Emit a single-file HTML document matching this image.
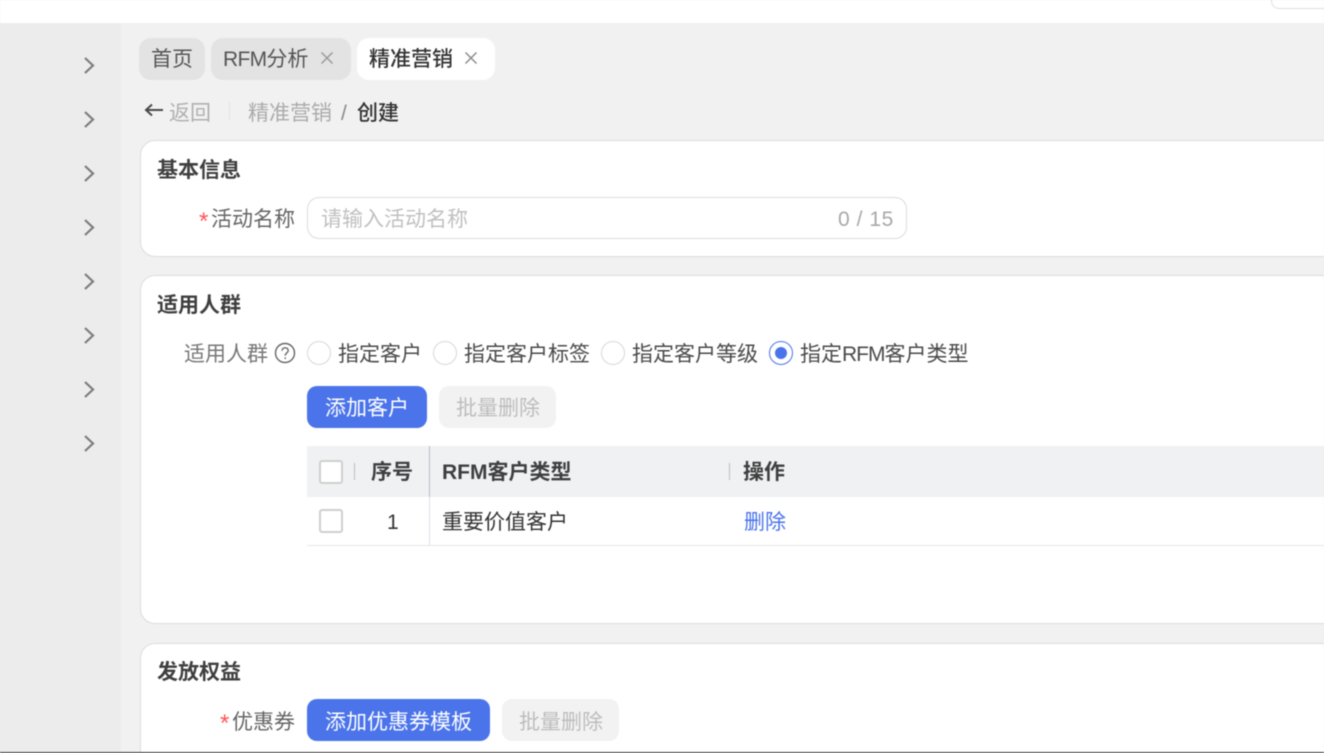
<!DOCTYPE html>
<html lang="zh-CN">
<head>
<meta charset="utf-8">
<style>
html,body{margin:0;padding:0;width:1324px;height:753px;overflow:hidden;background:#f0f0f0}
#p{position:relative;width:1324px;height:753px;overflow:hidden;background:#f1f1f1;font-family:"Liberation Sans","Noto Sans CJK SC",sans-serif;font-size:21px;color:#4a4a4a;filter:blur(.45px)}
#p div,#p svg{position:absolute}
.t{white-space:nowrap;line-height:30px;height:30px}
.b{font-weight:700;color:#3f3f3f}
.card{left:140px;width:1220px;background:#fff;border:1px solid #dcdcdc;border-radius:15px;box-sizing:border-box}
.radio{width:24px;height:24px;border:1.5px solid #d8d8d8;border-radius:50%;box-sizing:border-box;background:#fff}
.cb{width:24px;height:24px;border:2px solid #cfcfcf;border-radius:3px;box-sizing:border-box;background:#fff}
.btn{height:42px;border-radius:10px}
.blue{background:#4b74ea}
.gray{background:#f2f2f2}
.sep{width:1px;background:#b9bec6}
.star{font-size:24px;color:#f55}
.n{letter-spacing:-1px}
</style>
</head>
<body>
<div id="p">
  <div style="left:0;top:0;width:1324px;height:23px;background:#fff"></div>
  <div style="left:1271px;top:-12px;width:80px;height:19px;border:1px solid #dfdfdf;border-radius:8px;background:#fff"></div>
  <div style="left:0;top:23px;width:121px;height:730px;background:#ececec"></div>

  <svg style="left:80px;top:50px" width="20" height="410" fill="none" stroke="#7d7d7d" stroke-width="2.2">
    <path d="M5 8l8 7.500-8 7.500"/><path d="M5 62l8 7.500-8 7.500"/><path d="M5 116l8 7.500-8 7.500"/><path d="M5 170l8 7.500-8 7.500"/><path d="M5 224l8 7.500-8 7.500"/><path d="M5 278l8 7.500-8 7.500"/><path d="M5 332l8 7.500-8 7.500"/><path d="M5 386l8 7.500-8 7.500"/>
  </svg>

  <div style="left:139px;top:38px;width:66px;height:42px;border-radius:12px;background:#e3e3e3"></div>
  <div class="t" style="left:151px;top:45px;color:#555">首页</div>
  <div style="left:211px;top:38px;width:140px;height:42px;border-radius:12px;background:#e3e3e3"></div>
  <div class="t" style="left:223px;top:45px;color:#555"><span class="n" style="letter-spacing:-.7px">RFM</span>分析</div>
  <svg style="left:320px;top:51px" width="14" height="14" fill="none" stroke="#9a9a9a" stroke-width="1.500"><path d="M1.500 1.500l11 11M12.500 1.500l-11 11"/></svg>
  <div style="left:357px;top:38px;width:138px;height:42px;border-radius:12px;background:#fff"></div>
  <div class="t" style="left:369px;top:45px;color:#333;font-weight:500">精准营销</div>
  <svg style="left:464px;top:51px" width="14" height="14" fill="none" stroke="#8c8c8c" stroke-width="1.500"><path d="M1.500 1.500l11 11M12.500 1.500l-11 11"/></svg>

  <svg style="left:143px;top:100px" width="22" height="20" fill="none" stroke="#4a4a4a" stroke-width="2"><path d="M20 10H3M9 4.500L3 10l6 5.500"/></svg>
  <div class="t" style="left:169px;top:99px;color:#b0b0b0">返回</div>
  <div style="left:229px;top:102px;width:1px;height:18px;background:#e4e4e4"></div>
  <div class="t" style="left:248px;top:99px;color:#ababab">精准营销</div>
  <div class="t" style="left:341px;top:99px;color:#8a8a8a">/</div>
  <div class="t" style="left:357px;top:99px;color:#333;font-weight:500">创建</div>

  <div class="card" style="top:140px;height:117px"></div>
  <div class="t b" style="left:157px;top:156px">基本信息</div>
  <div class="t star" style="left:199px;top:207px">*</div>
  <div class="t" style="left:211px;top:205px;color:#666">活动名称</div>
  <div style="left:307px;top:197px;width:600px;height:42px;border:1.500px solid #dcdcdc;border-radius:12px;box-sizing:border-box;background:#fff"></div>
  <div class="t" style="left:321px;top:205px;color:#c0c0c0">请输入活动名称</div>
  <div class="t" style="left:838px;top:205px;color:#a8a8a8;letter-spacing:.55px">0 / 15</div>

  <div class="card" style="top:275px;height:349px"></div>
  <div class="t b" style="left:157px;top:291px">适用人群</div>
  <div class="t" style="left:184px;top:340px;color:#777">适用人群</div>
  <svg style="left:274px;top:342px" width="22" height="22" fill="none" stroke="#666" stroke-width="1.400"><circle cx="11" cy="11" r="9.500"/><path d="M8 8.800c0-4 6.200-4 6.200-.2 0 2.400-3 2.400-3 5"/><path d="M11.200 15.400v1.600"/></svg>
  <div class="radio" style="left:307px;top:341px"></div>
  <div class="t" style="left:338px;top:340px">指定客户</div>
  <div class="radio" style="left:433px;top:341px"></div>
  <div class="t" style="left:464px;top:340px">指定客户标签</div>
  <div class="radio" style="left:601px;top:341px"></div>
  <div class="t" style="left:632px;top:340px">指定客户等级</div>
  <div class="radio" style="left:769px;top:341px;border-color:#4b74ea"></div>
  <div style="left:775px;top:347px;width:12px;height:12px;border-radius:50%;background:#4b74ea"></div>
  <div class="t" style="left:800px;top:340px">指定<span class="n">RFM</span>客户类型</div>

  <div class="btn blue" style="left:307px;top:386px;width:120px"></div>
  <div class="t" style="left:325px;top:394px;color:#fff">添加客户</div>
  <div class="btn gray" style="left:439px;top:386px;width:117px"></div>
  <div class="t" style="left:456px;top:394px;color:#bdbdbd">批量删除</div>

  <div style="left:307px;top:446px;width:1017px;height:51px;background:#f0f1f3"></div>
  <div class="cb" style="left:319px;top:460px"></div>
  <div class="sep" style="left:354px;top:463px;height:17px"></div>
  <div class="t b" style="left:371px;top:458px">序号</div>
  <div style="left:429px;top:446px;width:1px;height:100px;background:#dfe1e5"></div>
  <div style="left:429px;top:446px;width:1px;height:51px;background:#b9bec6"></div>
  <div class="t b" style="left:442px;top:458px">RFM客户类型</div>
  <div class="sep" style="left:729px;top:463px;height:17px"></div>
  <div class="t b" style="left:743px;top:458px">操作</div>

  <div class="cb" style="left:319px;top:509px"></div>
  <div class="t" style="left:387px;top:508px;color:#333">1</div>
  <div class="t" style="left:442px;top:508px;color:#333">重要价值客户</div>
  <div class="t" style="left:744px;top:508px;color:#4b74ea">删除</div>
  <div style="left:307px;top:545px;width:1017px;height:1px;background:#e6e6e6"></div>

  <div class="card" style="top:643px;height:131px"></div>
  <div class="t b" style="left:157px;top:658px">发放权益</div>
  <div class="t star" style="left:220px;top:709px">*</div>
  <div class="t" style="left:232px;top:708px;color:#666">优惠券</div>
  <div class="btn blue" style="left:307px;top:699px;width:183px"></div>
  <div class="t" style="left:325px;top:708px;color:#fff">添加优惠券模板</div>
  <div class="btn gray" style="left:502px;top:699px;width:117px"></div>
  <div class="t" style="left:519px;top:708px;color:#bdbdbd">批量删除</div>

  <div style="left:0;top:752px;width:1324px;height:1px;background:#333"></div>
</div>
</body>
</html>
